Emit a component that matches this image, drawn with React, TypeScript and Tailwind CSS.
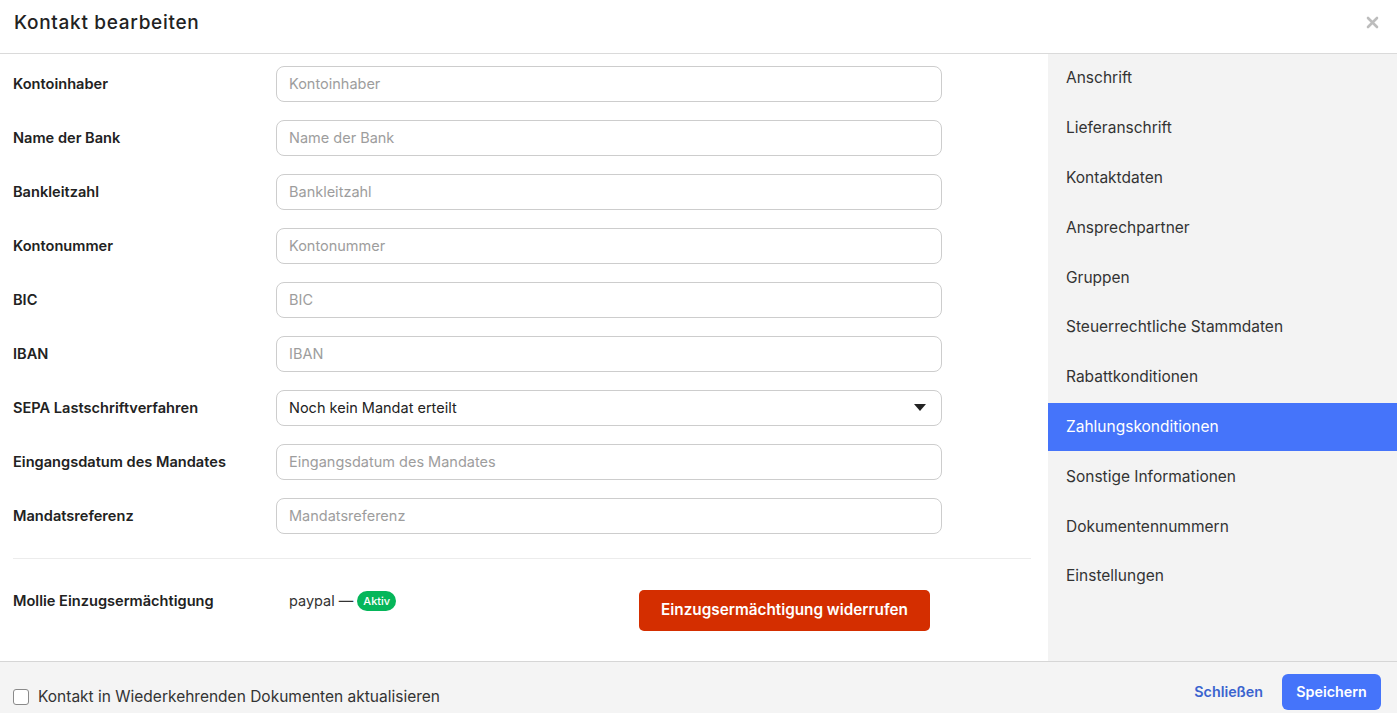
import React from 'react';

const fields = [
  'Kontoinhaber',
  'Name der Bank',
  'Bankleitzahl',
  'Kontonummer',
  'BIC',
  'IBAN',
];

const fieldsAfter = ['Eingangsdatum des Mandates', 'Mandatsreferenz'];

const sections = [
  'Anschrift',
  'Lieferanschrift',
  'Kontaktdaten',
  'Ansprechpartner',
  'Gruppen',
  'Steuerrechtliche Stammdaten',
  'Rabattkonditionen',
  'Zahlungskonditionen',
  'Sonstige Informationen',
  'Dokumentennummern',
  'Einstellungen',
];

const active = 'Zahlungskonditionen';

function FieldRow({ label, children }: { label: string; children: React.ReactNode }) {
  return (
    <div className="flex items-center h-9">
      <label className="w-[263px] shrink-0 pt-[2px] text-[14.6px] font-semibold text-[#222]">{label}</label>
      {children}
    </div>
  );
}

function TextField({ placeholder }: { placeholder: string }) {
  return (
    <input
      placeholder={placeholder}
      className="w-[666px] h-9 rounded-lg border border-[#cdcdcd] px-[12px] pb-[1px] text-[14.5px] text-[#222] placeholder:text-[#9d9d9d] outline-none bg-white"
    />
  );
}

export default function App() {
  return (
    <div
      className="w-[1397px] h-[713px] bg-white flex flex-col overflow-hidden text-[#222]"
      style={{ fontFamily: 'Inter, "Noto Sans", sans-serif' }}
    >
      <header className="h-[54px] shrink-0 flex items-center justify-between pl-[14px] pr-[18px] border-b border-[#dadada]">
        <h1 className="text-[19px] font-medium tracking-[0.7px] text-[#222] -mt-[7px]">
          Kontakt bearbeiten
        </h1>
        <button className="text-[#bdbdbd] -mt-[8px]" aria-label="Schließen">
          <svg width="13" height="13" viewBox="0 0 13 13">
            <path d="M2 2 L11 11 M11 2 L2 11" stroke="currentColor" strokeWidth="2.6" strokeLinecap="round" />
          </svg>
        </button>
      </header>

      <div className="flex flex-1 min-h-0">
        <main className="w-[1048px] shrink-0 pl-[13px] pr-[17px] pt-[12px]">
          <div className="flex flex-col gap-[18px]">
            {fields.map((f) => (
              <FieldRow key={f} label={f}>
                <TextField placeholder={f} />
              </FieldRow>
            ))}
            <FieldRow label="SEPA Lastschriftverfahren">
              <div className="w-[666px] h-9 rounded-lg border border-[#cdcdcd] pl-[12px] pr-[15px] pb-[1px] flex items-center justify-between text-[14.5px] text-[#222]">
                <span>Noch kein Mandat erteilt</span>
                <svg width="12" height="7" viewBox="0 0 12 7">
                  <path d="M0 0 H12 L6 7 Z" fill="#222" />
                </svg>
              </div>
            </FieldRow>
            {fieldsAfter.map((f) => (
              <FieldRow key={f} label={f}>
                <TextField placeholder={f} />
              </FieldRow>
            ))}
          </div>

          <div className="mt-[24px] border-t border-[#ececec]" />

          <div className="flex items-start pt-[31px]">
            <div className="w-[263px] shrink-0 text-[14.6px] font-semibold leading-[22px] text-[#222]">
              Mollie Einzugsermächtigung
            </div>
            <div className="w-[363px] shrink-0 pl-[13px] flex items-center gap-[4px] text-[14.5px] leading-[22px] text-[#333]">
              <span>paypal —</span>
              <span className="rounded-full bg-[#05b65a] text-white text-[11px] font-medium leading-[20px] px-[6px]">Aktiv</span>
            </div>
            <button className="h-[41px] w-[291px] rounded-[5px] bg-[#d42e00] text-white text-[15.3px] font-semibold">
              Einzugsermächtigung widerrufen
            </button>
          </div>
        </main>

        <nav className="flex-1 bg-[#f3f3f3] flex flex-col gap-[1.8px]">
          {sections.map((s) => (
            <div
              key={s}
              className={
                s === active
                  ? 'h-12 shrink-0 flex items-center px-[18px] text-[15.5px] bg-[#4574fa] text-white'
                  : 'h-12 shrink-0 flex items-center px-[18px] text-[15.5px] text-[#333]'
              }
            >
              {s}
            </div>
          ))}
        </nav>
      </div>

      <footer className="h-[52px] shrink-0 bg-[#f4f4f4] border-t border-[#d6d6d6] flex items-center justify-between pl-[13px] pr-[16px]">
        <label className="flex items-center gap-[9px] text-[15.5px] text-[#333] mt-[18px]">
          <span className="w-4 h-4 rounded-[3px] border border-[#8a8a8a] bg-white" />
          Kontakt in Wiederkehrenden Dokumenten aktualisieren
        </label>
        <div className="flex items-center gap-[19px] mt-[9px]">
          <button className="text-[14.3px] font-semibold text-[#3b64cf]">Schließen</button>
          <button className="h-9 w-[99px] rounded-[6px] bg-[#4574fa] text-white text-[14.3px] font-semibold">
            Speichern
          </button>
        </div>
      </footer>
    </div>
  );
}
